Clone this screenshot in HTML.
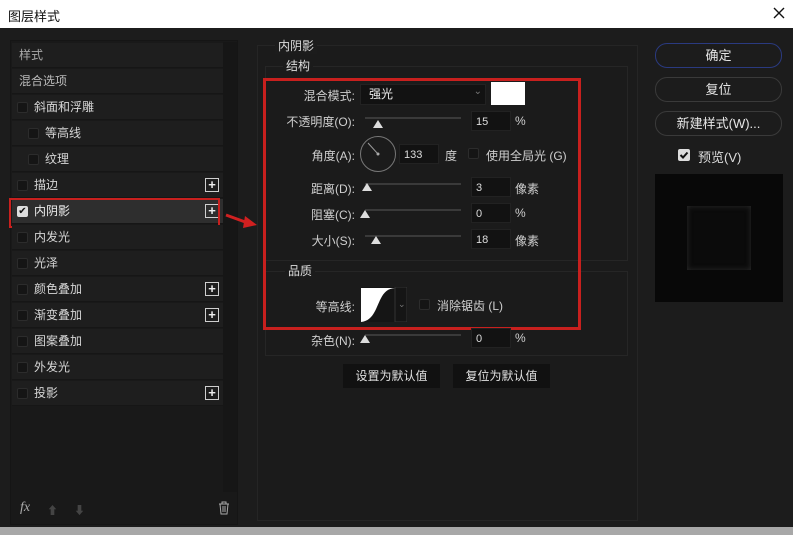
<!DOCTYPE html>
<html><head><meta charset="utf-8"><style>
*{margin:0;padding:0;box-sizing:border-box}
body{width:793px;height:535px;background:#1c1c1c;font-family:"Liberation Sans","Noto Sans CJK SC",sans-serif;font-size:12px;color:#cfcfcf;position:relative;overflow:hidden}
.a{position:absolute}
.title{left:0;top:0;width:793px;height:28px;background:#fff;color:#111;font-size:13px;padding:6px 0 0 8px}
.row{position:absolute;left:12px;width:211px;height:25px;background:#1e1e1e;border-bottom:1px solid #161616;line-height:25px;color:#d6d6d6}
.cb{position:absolute;width:11px;height:11px;border:1px solid #2c2c2c;background:#151515;border-radius:2px;top:7px}
.plus{position:absolute;left:193px;top:5px;width:14px;height:14px;border:1px solid #cfcfcf;color:#eee;font-size:13px;line-height:11px;text-align:center;font-weight:bold}
.lbl{position:absolute;text-align:right;color:#cfcfcf}
.track{position:absolute;height:2px;background:#3a3a3a}
.thumb{position:absolute;width:0;height:0;border-left:5px solid transparent;border-right:5px solid transparent;border-bottom:8px solid #ddd}
.inp{position:absolute;height:20px;background:#121212;border:1px solid #222;color:#ddd;padding:4px 0 0 4px;font-size:11px;line-height:12px}
.btn{position:absolute;left:655px;width:127px;height:25px;border:1px solid #3a3a3a;border-radius:12px;text-align:center;line-height:23px;color:#e6e6e6;font-size:13px}
</style></head><body>
<div class="a title">图层样式</div>
<svg class="a" style="left:773px;top:7px" width="12" height="12"><path d="M1 1L11 11M11 1L1 11" stroke="#111" stroke-width="1.4"/></svg>
<div class="a" style="left:0;top:527px;width:793px;height:8px;background:#a8a8a8"></div>

<div class="a" style="left:10px;top:40px;width:228px;height:485px;background:#191919;border:1px solid #151515"></div>
<div class="a" style="left:223px;top:42px;width:14px;height:450px;background:#161616"></div>
<div class="row" style="top:43px;padding-left:7px;color:#a8a8a8">样式</div>
<div class="row" style="top:69px;padding-left:7px;color:#bbb">混合选项</div>
<div class="row" style="top:95px"><span class="cb" style="left:5px"></span><span style="position:absolute;left:22px">斜面和浮雕</span></div>
<div class="row" style="top:121px"><span class="cb" style="left:16px"></span><span style="position:absolute;left:33px">等高线</span></div>
<div class="row" style="top:147px"><span class="cb" style="left:16px"></span><span style="position:absolute;left:33px">纹理</span></div>
<div class="row" style="top:173px"><span class="cb" style="left:5px"></span><span style="position:absolute;left:22px">描边</span><span class="plus">+</span></div>
<div class="row" style="top:199px;background:#2e2e2e"><span class="cb" style="left:5px;background:#ddd;border-color:#ddd;color:#111;font-size:10px;line-height:9px;text-align:center">✔</span><span style="position:absolute;left:22px;color:#eee">内阴影</span><span class="plus">+</span></div>
<div class="a" style="left:9px;top:198px;width:211px;height:30px;border:2px solid #c8201e"></div>
<div class="row" style="top:225px"><span class="cb" style="left:5px"></span><span style="position:absolute;left:22px">内发光</span></div>
<div class="row" style="top:251px"><span class="cb" style="left:5px"></span><span style="position:absolute;left:22px">光泽</span></div>
<div class="row" style="top:277px"><span class="cb" style="left:5px"></span><span style="position:absolute;left:22px">颜色叠加</span><span class="plus">+</span></div>
<div class="row" style="top:303px"><span class="cb" style="left:5px"></span><span style="position:absolute;left:22px">渐变叠加</span><span class="plus">+</span></div>
<div class="row" style="top:329px"><span class="cb" style="left:5px"></span><span style="position:absolute;left:22px">图案叠加</span></div>
<div class="row" style="top:355px"><span class="cb" style="left:5px"></span><span style="position:absolute;left:22px">外发光</span></div>
<div class="row" style="top:381px"><span class="cb" style="left:5px"></span><span style="position:absolute;left:22px">投影</span><span class="plus">+</span></div>
<div class="a" style="left:20px;top:500px;font-style:italic;color:#aaa;font-family:'Liberation Serif',serif;font-size:14px">fx</div>
<div class="a" style="left:47px;top:502px;color:#444;font-size:11px">⬆</div>
<div class="a" style="left:74px;top:502px;color:#444;font-size:11px">⬇</div>
<svg class="a" style="left:218px;top:501px" width="12" height="14"><path d="M1 3H11M4 3V1H8V3M2 3L3 13H9L10 3M5 5V11M7 5V11" stroke="#aaa" fill="none"/></svg>

<svg class="a" style="left:224px;top:210px" width="36" height="20"><path d="M2 5 L24 13" stroke="#d02020" stroke-width="3"/><path d="M21 6 L33 15 L19 18Z" fill="#d02020"/></svg>

<div class="a" style="left:257px;top:45px;width:381px;height:476px;border:1px solid #252525;background:#1b1b1b"></div>
<div class="a" style="left:275px;top:37px;background:#1c1c1c;padding:0 3px;color:#ddd">内阴影</div>
<div class="a" style="left:265px;top:66px;width:363px;height:195px;border:1px solid #262626"></div>
<div class="a" style="left:283px;top:57px;background:#1b1b1b;padding:0 3px;color:#ddd">结构</div>
<div class="a" style="left:265px;top:271px;width:363px;height:85px;border:1px solid #262626"></div>
<div class="a" style="left:285px;top:262px;background:#1b1b1b;padding:0 3px;color:#ddd">品质</div>

<div class="lbl" style="left:270px;top:87px;width:85px">混合模式:</div>
<div class="inp" style="left:360px;top:84px;width:126px;height:21px;font-size:12px;padding:3px 0 0 8px;color:#eee">强光<span style="position:absolute;right:3px;top:1px;color:#777;font-size:10px">⌄</span></div>
<div class="a" style="left:491px;top:82px;width:34px;height:23px;background:#fff"></div>

<div class="lbl" style="left:260px;top:113px;width:95px">不透明度(O):</div>
<div class="track" style="left:365px;top:117px;width:96px"></div><div class="thumb" style="left:373px;top:120px"></div>
<div class="inp" style="left:471px;top:111px;width:40px">15</div><div class="a" style="left:515px;top:114px">%</div>

<div class="lbl" style="left:270px;top:147px;width:85px">角度(A):</div>
<div class="a" style="left:360px;top:136px;width:36px;height:36px;border:1px solid #777;border-radius:50%"></div>
<svg class="a" style="left:360px;top:136px" width="36" height="36"><path d="M18 18 L8 7" stroke="#999" stroke-width="1"/><circle cx="18" cy="18" r="1.5" fill="#aaa"/></svg>
<div class="inp" style="left:399px;top:144px;width:40px">133</div><div class="a" style="left:445px;top:147px">度</div>
<div class="cb a" style="left:468px;top:148px"></div><div class="a" style="left:486px;top:147px">使用全局光 (G)</div>

<div class="lbl" style="left:270px;top:180px;width:85px">距离(D):</div>
<div class="track" style="left:365px;top:183px;width:96px"></div><div class="thumb" style="left:362px;top:183px"></div>
<div class="inp" style="left:471px;top:177px;width:40px">3</div><div class="a" style="left:515px;top:180px">像素</div>

<div class="lbl" style="left:270px;top:206px;width:85px">阻塞(C):</div>
<div class="track" style="left:365px;top:209px;width:96px"></div><div class="thumb" style="left:360px;top:210px"></div>
<div class="inp" style="left:471px;top:203px;width:40px">0</div><div class="a" style="left:515px;top:206px">%</div>

<div class="lbl" style="left:270px;top:232px;width:85px">大小(S):</div>
<div class="track" style="left:365px;top:235px;width:96px"></div><div class="thumb" style="left:371px;top:236px"></div>
<div class="inp" style="left:471px;top:229px;width:40px">18</div><div class="a" style="left:515px;top:232px">像素</div>

<div class="lbl" style="left:270px;top:298px;width:85px">等高线:</div>
<svg class="a" style="left:361px;top:287px" width="46" height="35"><rect width="46" height="35" fill="#151515"/><path d="M0 35 C20 33 14 2 34 1 L0 1Z" fill="#fff"/><rect x="34" y="0" width="12" height="35" fill="#151515" stroke="#333"/><text x="37" y="20" fill="#777" font-size="9">⌄</text></svg>
<div class="cb a" style="left:419px;top:299px"></div><div class="a" style="left:437px;top:297px">消除锯齿 (L)</div>

<div class="a" style="left:263px;top:78px;width:318px;height:252px;border:3px solid #c8201e"></div>

<div class="lbl" style="left:270px;top:332px;width:85px">杂色(N):</div>
<div class="track" style="left:365px;top:334px;width:96px"></div><div class="thumb" style="left:360px;top:335px"></div>
<div class="inp" style="left:471px;top:328px;width:40px">0</div><div class="a" style="left:515px;top:331px">%</div>

<div class="a" style="left:343px;top:364px;width:97px;height:24px;background:#111;text-align:center;line-height:24px;color:#e0e0e0">设置为默认值</div>
<div class="a" style="left:453px;top:364px;width:97px;height:24px;background:#111;text-align:center;line-height:24px;color:#e0e0e0">复位为默认值</div>

<div class="btn" style="top:43px;border-color:#2a3a80">确定</div>
<div class="btn" style="top:77px">复位</div>
<div class="btn" style="top:111px">新建样式(W)...</div>
<div class="a" style="left:678px;top:149px;width:12px;height:12px;background:#ddd;border-radius:2px"></div>
<svg class="a" style="left:678px;top:149px" width="12" height="12"><path d="M2.5 6L5 8.5L9.5 3.5" stroke="#111" stroke-width="2" fill="none"/></svg>
<div class="a" style="left:698px;top:147px;color:#ddd;font-size:13px">预览(V)</div>
<div class="a" style="left:655px;top:174px;width:128px;height:128px;background:#080808"></div>
<div class="a" style="left:687px;top:206px;width:64px;height:64px;background:#0b0b0b;box-shadow:inset 0 0 6px #2a2a2a"></div>
</body></html>
